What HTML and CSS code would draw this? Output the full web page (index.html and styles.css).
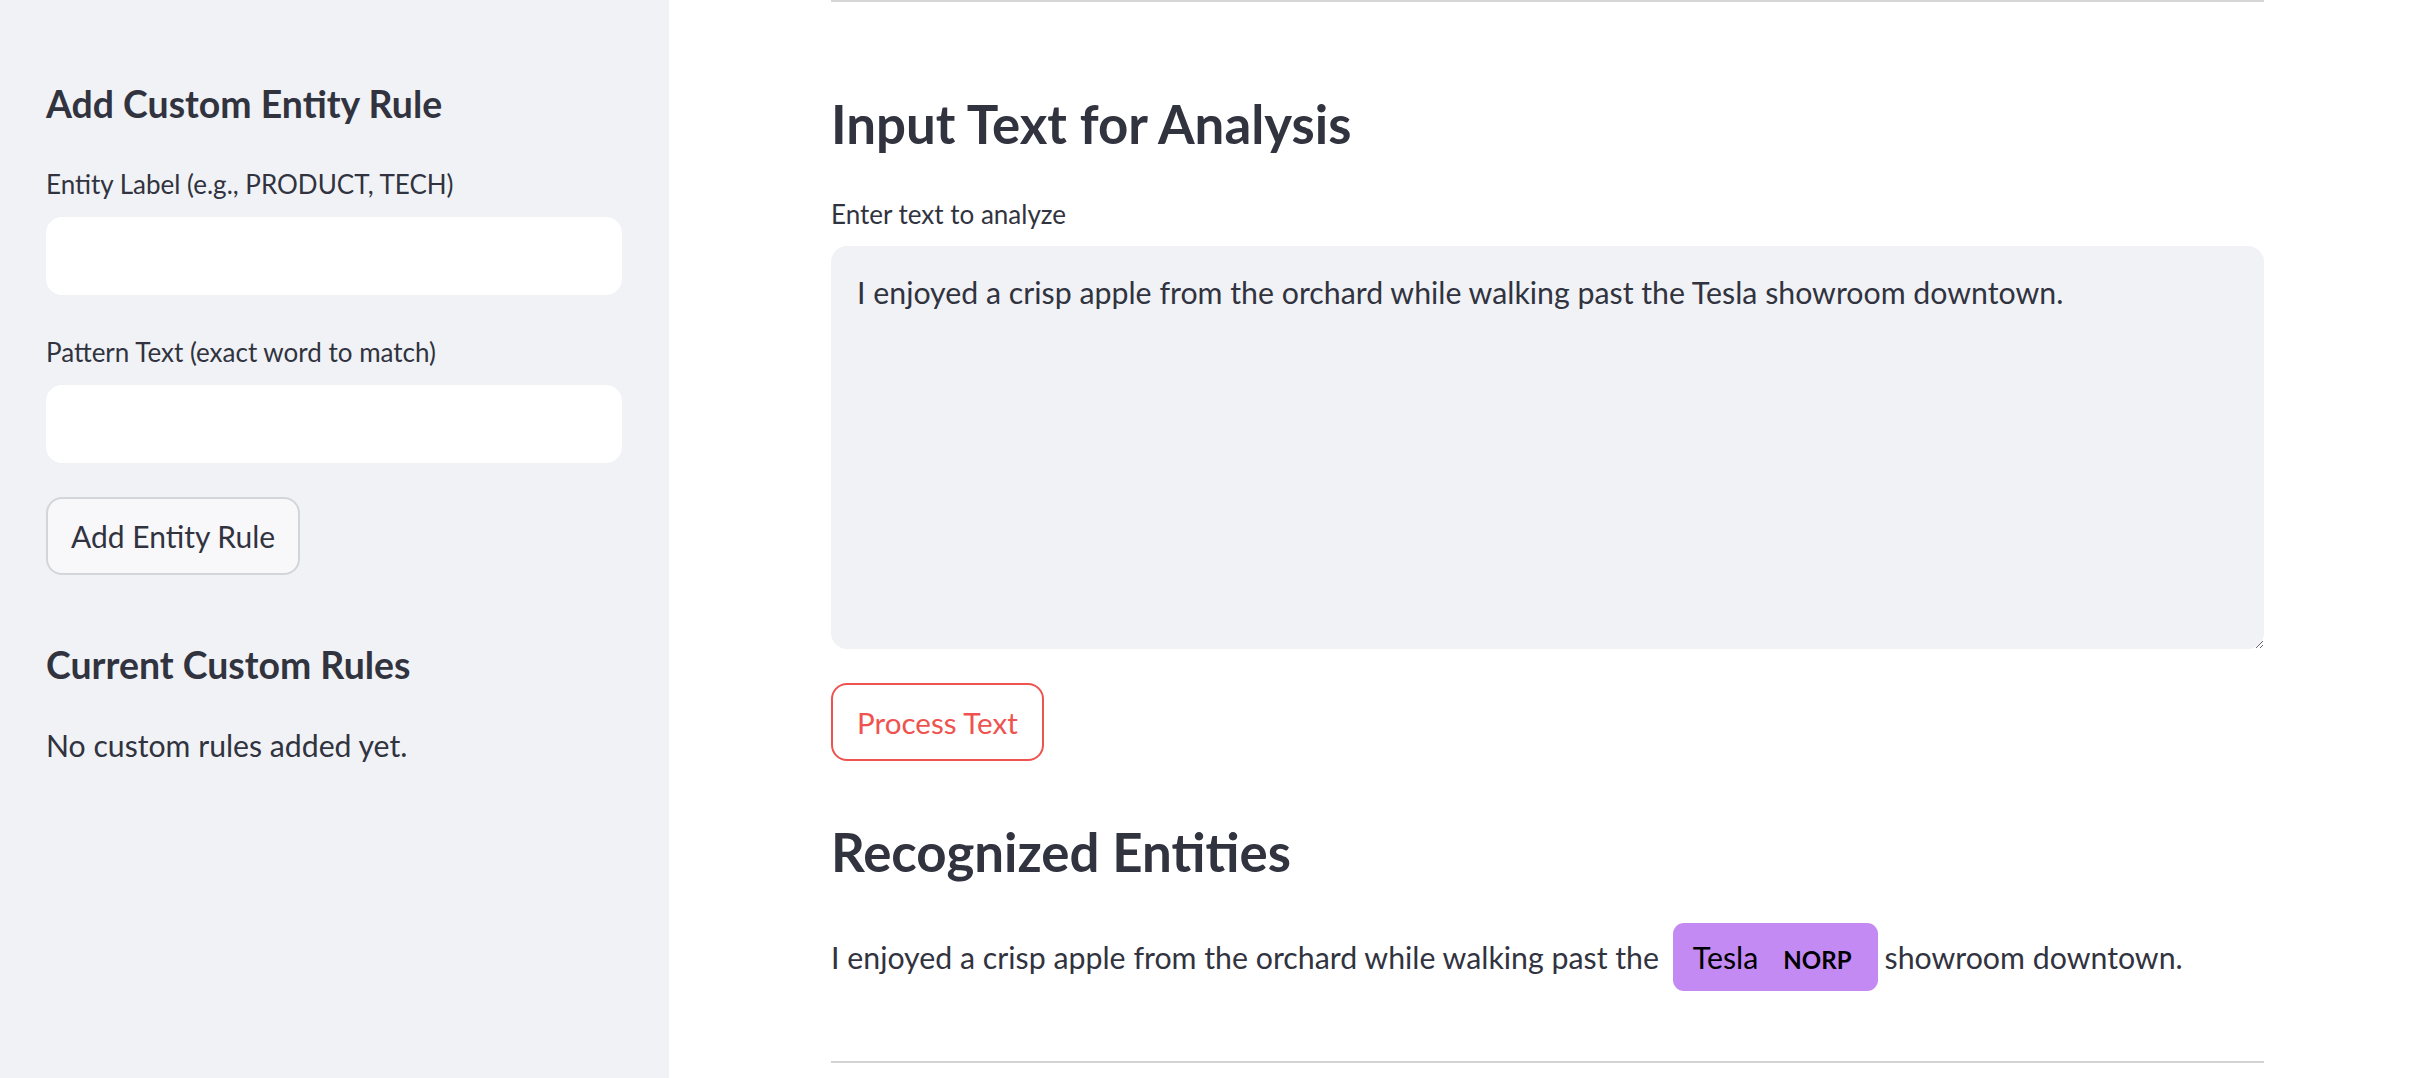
FILE: index.html
```html
<!DOCTYPE html>
<html>
<head>
<meta charset="utf-8">
<link rel="stylesheet" href="styles.css">
</head>
<body>
<div class="app">
  <aside class="sidebar">
    <h3 class="side-heading">Add Custom Entity Rule</h3>
    <label class="field-label">Entity Label (e.g., PRODUCT, TECH)</label>
    <div class="text-input"></div>
    <label class="field-label">Pattern Text (exact word to match)</label>
    <div class="text-input"></div>
    <button class="btn-secondary">Add Entity Rule</button>
    <h3 class="side-heading side-heading-2">Current Custom Rules</h3>
    <p class="side-text">No custom rules added yet.</p>
  </aside>
  <main class="main">
    <div class="content">
      <hr class="rule">
      <h2 class="main-heading">Input Text for Analysis</h2>
      <label class="field-label main-label">Enter text to analyze</label>
      <textarea class="textarea">I enjoyed a crisp apple from the orchard while walking past the Tesla showroom downtown.</textarea>
      <button class="btn-primary-outline">Process Text</button>
      <h2 class="main-heading heading-2">Recognized Entities</h2>
      <div class="entities">I enjoyed a crisp apple from the orchard while walking past the <mark class="entity">Tesla<span class="entity-label">NORP</span></mark>showroom downtown.</div>
      <hr class="rule rule-bottom">
    </div>
  </main>
</div>
</body>
</html>
```

FILE: styles.css
```css
* { box-sizing: border-box; }
html, body { margin: 0; padding: 0; }
body {
  font-family: "Lato", "Noto Sans", sans-serif;
  color: #31333f;
  background: #ffffff;
  width: 2430px;
  height: 1078px;
  overflow: hidden;
}
.app { display: flex; height: 1078px; }
.sidebar {
  width: 669px;
  flex: none;
  background: #f0f2f6;
  padding: 79px 47px 0 46px;
  display: flex;
  flex-direction: column;
  align-items: flex-start;
}
.side-heading {
  margin: 0;
  font-size: 37.4px;
  line-height: 50px;
  font-weight: 700;
}
.side-heading-2 { margin-top: 65px; }
.field-label {
  display: block;
  font-size: 26px;
  line-height: 40px;
  margin-top: 35px;
}
.text-input {
  width: 100%;
  height: 78px;
  margin-top: 13px;
  background: #ffffff;
  border-radius: 16px;
}
.sidebar .field-label + .text-input + .field-label { margin-top: 37px; }
.btn-secondary {
  margin-top: 34px;
  height: 78px;
  padding: 0 23px;
  font-family: inherit;
  font-size: 30px;
  color: #31333f;
  background: #f8f8fb;
  border: 2px solid #d3d5d9;
  border-radius: 16px;
}
.side-text {
  margin: 31px 0 0;
  font-size: 30.2px;
  line-height: 48px;
}
.main { flex: 1; }
.content { margin-left: 162px; width: 1433px; display: flex; flex-direction: column; align-items: flex-start; }
.rule { width: 100%; margin: 0; border: 0; height: 2px; background: #d6d6d9; }
.main-heading {
  margin: 87px 0 0;
  font-size: 52.8px;
  line-height: 70px;
  font-weight: 700;
}
.main-label { margin-top: 35px; }
.textarea {
  margin-top: 12px;
  width: 100%;
  height: 403px;
  background: #f0f2f6;
  border: 0;
  border-radius: 16px;
  padding: 22px 26px;
  font-family: inherit;
  font-size: 30.3px;
  line-height: 48px;
  color: #31333f;
  resize: vertical;
  outline: none;
}
.btn-primary-outline {
  margin-top: 34px;
  height: 78px;
  padding: 0 24px;
  font-family: inherit;
  font-size: 29.6px;
  color: #ee5350;
  background: #ffffff;
  border: 2px solid #ee5350;
  border-radius: 16px;
}
.heading-2 { margin-top: 56px; }
.entities {
  margin-top: 30px;
  font-size: 30.3px;
  line-height: 80px;
}
.entity {
  display: inline-block;
  background: #c38af3;
  color: #000;
  line-height: 68px;
  height: 68px;
  padding: 0 26px 0 20px;
  margin: 0 7px 0 6px;
  border-radius: 11px;
  vertical-align: baseline;
}
.entity-label {
  font-size: 24px;
  font-weight: 700;
  margin-left: 25px;
}
.rule-bottom { margin-top: 64px; background: #d3d3d3; }
```
